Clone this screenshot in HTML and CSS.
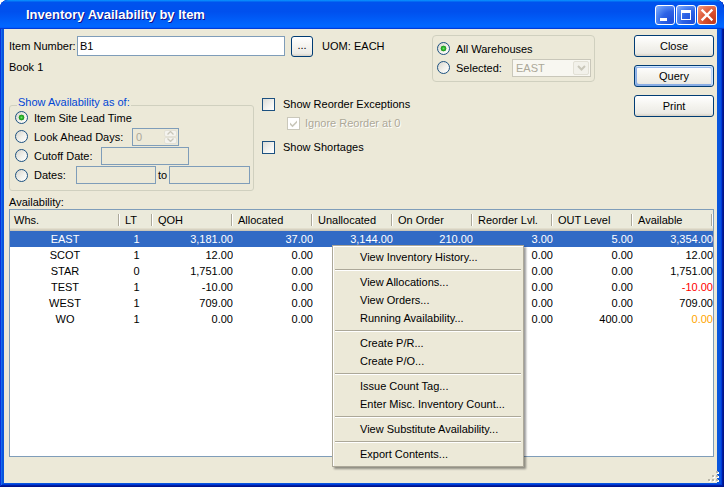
FILE: index.html
```html
<!DOCTYPE html>
<html>
<head>
<meta charset="utf-8">
<title>Inventory Availability by Item</title>
<link rel="stylesheet" href="styles.css">
</head>
<body>
<div class="window">
  <div class="titlebar">
    <span class="title">Inventory Availability by Item</span>
    <div class="tb-buttons">
      <span class="tb-btn blue"><svg width="18" height="18" viewBox="0 0 18 18"><rect x="4" y="12" width="7" height="3" fill="#fff"/></svg></span>
      <span class="tb-btn blue"><svg width="18" height="18" viewBox="0 0 18 18"><rect x="4.5" y="4.5" width="9" height="9" fill="none" stroke="#fff" stroke-width="1"/><rect x="4" y="4" width="10" height="3" fill="#fff"/></svg></span>
      <span class="tb-btn red"><svg width="18" height="18" viewBox="0 0 18 18"><path d="M4.5 4.5 L13.5 13.5 M13.5 4.5 L4.5 13.5" stroke="#fff" stroke-width="2.4" stroke-linecap="square"/></svg></span>
    </div>
  </div>
  <div class="client">
    <div class="top">
      <div class="left-pane">
        <div class="item-row">
          <span class="lbl-item">Item Number:</span>
          <span class="textbox item-input">B1</span>
          <span class="btn dots">...</span>
          <span class="uom-lbl">UOM:</span>
          <span>EACH</span>
        </div>
        <div class="book">Book 1</div>
        <div class="lower">
          <fieldset class="group avail">
            <legend>Show Availability as of:</legend>
            <div class="opt-list">
              <div class="opt"><span class="radio on"></span><span>Item Site Lead Time</span></div>
              <div class="opt"><span class="radio"></span><span class="opt-lbl w-look">Look Ahead Days:</span><span class="spin"><span class="spin-val">0</span><span class="spin-arrows"><span class="spin-up"><svg width="7" height="4" viewBox="0 0 7 4"><path d="M0.5 3.5 L3.5 0.5 L6.5 3.5" fill="none" stroke="#C9C7BA" stroke-width="1.3"/></svg></span><span class="spin-dn"><svg width="7" height="4" viewBox="0 0 7 4"><path d="M0.5 0.5 L3.5 3.5 L6.5 0.5" fill="none" stroke="#C9C7BA" stroke-width="1.3"/></svg></span></span></span></div>
              <div class="opt"><span class="radio"></span><span class="opt-lbl w-cut">Cutoff Date:</span><span class="textbox dis w-cutbox"></span></div>
              <div class="opt last"><span class="radio"></span><span class="opt-lbl w-dates">Dates:</span><span class="textbox dis w-d1"></span><span class="to">to</span><span class="textbox dis w-d2"></span></div>
            </div>
          </fieldset>
          <div class="checks">
            <div class="chk-row"><span class="chk"></span><span>Show Reorder Exceptions</span></div>
            <div class="chk-row sub"><span class="chk disabled"><svg width="11" height="11" viewBox="0 0 11 11"><path d="M2 4.5 L4.5 7 L9 2.5 L9 4.8 L4.5 9.3 L2 6.8 Z" fill="#C9C7BA"/></svg></span><span class="dis-text">Ignore Reorder at 0</span></div>
            <div class="chk-row third"><span class="chk"></span><span>Show Shortages</span></div>
          </div>
        </div>
      </div>
      <div class="wh-box">
        <div class="wh-row"><span class="radio on"></span><span>All Warehouses</span></div>
        <div class="wh-row"><span class="radio"></span><span class="wh-lbl">Selected:</span><span class="combo"><span class="combo-val">EAST</span><span class="combo-arrow"><svg width="9" height="6" viewBox="0 0 9 6"><path d="M1 1 L4.5 4.5 L8 1" fill="none" stroke="#C9C7BA" stroke-width="2"/></svg></span></span></div>
      </div>
      <div class="btn-col">
        <span class="btn big">Close</span>
        <span class="btn big default">Query</span>
        <span class="btn big">Print</span>
      </div>
    </div>
    <div class="avail-lbl">Availability:</div>
    <div class="table">
      <div class="thead">
        <span class="th first">Whs.</span>
        <span class="th">LT</span>
        <span class="th">QOH</span>
        <span class="th">Allocated</span>
        <span class="th">Unallocated</span>
        <span class="th">On Order</span>
        <span class="th">Reorder Lvl.</span>
        <span class="th">OUT Level</span>
        <span class="th">Available</span>
      </div>
      <div class="tr sel"><span class="td c">EAST</span><span class="td c">1</span><span class="td">3,181.00</span><span class="td">37.00</span><span class="td">3,144.00</span><span class="td">210.00</span><span class="td">3.00</span><span class="td">5.00</span><span class="td">3,354.00</span></div>
      <div class="tr"><span class="td c">SCOT</span><span class="td c">1</span><span class="td">12.00</span><span class="td">0.00</span><span class="td"></span><span class="td"></span><span class="td">0.00</span><span class="td">0.00</span><span class="td">12.00</span></div>
      <div class="tr"><span class="td c">STAR</span><span class="td c">0</span><span class="td">1,751.00</span><span class="td">0.00</span><span class="td"></span><span class="td"></span><span class="td">0.00</span><span class="td">0.00</span><span class="td">1,751.00</span></div>
      <div class="tr"><span class="td c">TEST</span><span class="td c">1</span><span class="td">-10.00</span><span class="td">0.00</span><span class="td"></span><span class="td"></span><span class="td">0.00</span><span class="td">0.00</span><span class="td neg">-10.00</span></div>
      <div class="tr"><span class="td c">WEST</span><span class="td c">1</span><span class="td">709.00</span><span class="td">0.00</span><span class="td"></span><span class="td"></span><span class="td">0.00</span><span class="td">0.00</span><span class="td">709.00</span></div>
      <div class="tr"><span class="td c">WO</span><span class="td c">1</span><span class="td">0.00</span><span class="td">0.00</span><span class="td"></span><span class="td"></span><span class="td">0.00</span><span class="td">400.00</span><span class="td warn">0.00</span></div>
    </div>
  </div>
  <div class="menu">
    <div class="mi">View Inventory History...</div>
    <div class="msep"></div>
    <div class="mi">View Allocations...</div>
    <div class="mi">View Orders...</div>
    <div class="mi">Running Availability...</div>
    <div class="msep"></div>
    <div class="mi">Create P/R...</div>
    <div class="mi">Create P/O...</div>
    <div class="msep"></div>
    <div class="mi">Issue Count Tag...</div>
    <div class="mi">Enter Misc. Inventory Count...</div>
    <div class="msep"></div>
    <div class="mi">View Substitute Availability...</div>
    <div class="msep"></div>
    <div class="mi">Export Contents...</div>
  </div>
  <svg class="grip" width="12" height="12" viewBox="0 0 12 12">
    <g fill="#fff"><rect x="10" y="2" width="2" height="2"/><rect x="6" y="6" width="2" height="2"/><rect x="10" y="6" width="2" height="2"/><rect x="2" y="10" width="2" height="2"/><rect x="6" y="10" width="2" height="2"/><rect x="10" y="10" width="2" height="2"/></g>
    <g fill="#B9B6A8"><rect x="9" y="1" width="2" height="2"/><rect x="5" y="5" width="2" height="2"/><rect x="9" y="5" width="2" height="2"/><rect x="1" y="9" width="2" height="2"/><rect x="5" y="9" width="2" height="2"/><rect x="9" y="9" width="2" height="2"/></g>
  </svg>
</div>
</body>
</html>
```

FILE: styles.css
```css
* { box-sizing: border-box; }
html, body { margin: 0; padding: 0; }
body {
  background: #ffffff;
  font-family: "Liberation Sans", Arial, sans-serif;
  font-size: 11px;
  color: #000;
}

.window {
  position: relative;
  width: 724px;
  height: 487px;
  display: flex;
  flex-direction: column;
  background: #0855DD;
  border-radius: 8px 8px 0 0;
  overflow: hidden;
  box-shadow: inset -1px -1px #00138C, inset 1px 1px #0831D9, inset -2px -2px #001EA0, inset 2px 2px #166AEE, inset -3px -3px #003BDA, inset 3px 3px #0855DD;
}

.titlebar {
  height: 29px;
  flex: none;
  display: flex;
  align-items: center;
  padding: 0 7px 0 26px;
  border-radius: 8px 8px 0 0;
  background: linear-gradient(180deg, #0997FF 0%, #0053EE 8%, #0050EE 40%, #0066FF 88%, #0066FF 93%, #005BFF 95%, #003DD7 96%, #003DD7 100%);
}
.title {
  flex: 1;
  color: #fff;
  font-weight: bold;
  font-size: 13px;
  text-shadow: 1px 1px #0F1089;
  white-space: nowrap;
}
.tb-buttons { display: flex; gap: 1px; margin-top: 1px; }
.tb-btn {
  width: 20px;
  height: 20px;
  border: 1px solid #fff;
  border-radius: 3px;
  display: flex;
  align-items: center;
  justify-content: center;
}
.tb-btn.blue {
  background: radial-gradient(circle at 85% 85%, #1F4FD8 0%, #2D63E6 45%, #5A8FF5 75%, #8DB3FA 100%);
}
.tb-btn.red {
  background: radial-gradient(circle at 85% 85%, #C23A1D 0%, #D9512F 45%, #E9795A 75%, #F3A58C 100%);
}

.client {
  flex: 1;
  margin: 0 7px 4px 4px;
  background: #ECE9D8;
  padding: 6px 3px 0 5px;
}

.top { display: flex; align-items: flex-start; }
.left-pane { width: 423px; flex: none; }

.item-row { display: flex; align-items: center; height: 22px; }
.lbl-item { width: 68px; }
.textbox {
  display: inline-block;
  border: 1px solid #7F9DB9;
  background: #fff;
  flex: none;
}
.item-input { width: 208px; height: 20px; line-height: 18px; padding-left: 2px; }
.btn {
  display: flex;
  align-items: center;
  justify-content: center;
  border: 1px solid #003C74;
  border-radius: 3px;
  background: linear-gradient(180deg, #FFFFFF 0%, #F4F3EE 50%, #ECEBE6 86%, #D6D0C5 100%);
  flex: none;
}
.dots { width: 22px; height: 21px; margin-left: 6px; padding-bottom: 2px; }
.uom-lbl { margin-left: 9px; width: 32px; }

.book { height: 20px; line-height: 20px; }

.lower { display: flex; align-items: flex-start; margin-top: 19px; }

.group {
  margin: 0;
  width: 245px;
  padding: 0 0 5px 5px;
  border: 1px solid #D0D0BF;
  border-radius: 3px;
  min-width: 0;
}
.group legend {
  color: #0046D5;
  line-height: 13px;
  padding: 0 1px 5px 1px;
  margin-left: 2px;
}
.opt-list { margin-top: -6px; }
.opt { display: flex; align-items: center; height: 19px; }
.opt.last { height: 20px; }
.opt .radio { margin-right: 6px; }
.opt-lbl { flex: none; }
.w-look { width: 98px; }
.w-cut { width: 67px; }
.w-dates { width: 42px; }
.textbox.dis { background: #ECE9D8; height: 18px; }
.w-cutbox { width: 88px; }
.w-d1 { width: 80px; }
.w-d2 { width: 81px; }
.to { margin-left: 2px; width: 11px; }

.spin {
  display: flex;
  width: 47px;
  height: 18px;
  border: 1px solid #7F9DB9;
  background: #ECE9D8;
}
.spin-val { flex: 1; color: #ACA899; padding-left: 3px; line-height: 16px; }
.spin-arrows { width: 15px; display: flex; flex-direction: column; padding: 1px; gap: 0; }
.spin-up, .spin-dn {
  flex: 1;
  display: flex;
  align-items: center;
  justify-content: center;
  background: #F4F3EE;
  border: 1px solid #E3E1D6;
  border-radius: 2px;
}

.radio {
  display: inline-block;
  width: 13px;
  height: 13px;
  border-radius: 50%;
  border: 1px solid #1C5180;
  background: linear-gradient(135deg, #D6D5CD 0%, #F2F1EC 55%, #FFFFFF 100%);
  flex: none;
}
.radio.on {
  background: radial-gradient(circle, #6EE06E 0px, #2BB52B 1.5px, #1F941F 2.6px, rgba(31,148,31,0) 3.2px), linear-gradient(135deg, #D6D5CD 0%, #F2F1EC 55%, #FFFFFF 100%);
}

.checks { margin-left: 8px; }
.chk-row { display: flex; align-items: center; height: 16px; }
.chk-row .chk { margin-right: 8px; }
.chk-row.sub { margin-top: 3px; padding-left: 25px; }
.chk-row.sub .chk { margin-right: 5px; }
.chk-row.third { margin-top: 8px; }
.chk {
  display: flex;
  align-items: center;
  justify-content: center;
  width: 13px;
  height: 13px;
  border: 1px solid #1C5180;
  background: linear-gradient(135deg, #DCDCD7 0%, #F4F4F1 60%, #FFFFFF 100%);
  flex: none;
}
.chk.disabled { border-color: #CAC8BB; background: #fff; }
.dis-text { color: #ACA899; text-shadow: 1px 1px #fff; }

.wh-box {
  width: 163px;
  height: 47px;
  flex: none;
  border: 1px solid #D0D0BF;
  border-radius: 4px;
  padding: 3px 0 0 4px;
}
.wh-row { display: flex; align-items: center; height: 19px; }
.wh-row .radio { margin-right: 6px; }
.wh-lbl { width: 56px; }
.combo {
  display: flex;
  width: 79px;
  height: 18px;
  border: 1px solid #C9C7BA;
  background: #F8F7F1;
}
.combo-val { flex: 1; color: #ACA899; padding-left: 3px; line-height: 16px; }
.combo-arrow {
  width: 16px;
  margin: 1px;
  display: flex;
  align-items: center;
  justify-content: center;
  background: #F2F1EA;
  border: 1px solid #E2E0D5;
  border-radius: 2px;
}

.btn-col { margin-left: 39px; display: flex; flex-direction: column; gap: 8px; }
.btn.big { width: 80px; height: 22px; }
.btn.default {
  box-shadow: inset -1px 1px #CEE7FF, inset 1px 2px #98B8EA, inset -2px 2px #BCD4F6, inset 1px -1px #89ADE4, inset 2px -2px #89ADE4;
}

.avail-lbl { margin-top: 5px; line-height: 13px; height: 13px; }

.table {
  width: 705px;
  height: 248px;
  border: 1px solid #7F9DB9;
  background: #fff;
}
.thead, .tr {
  display: grid;
  grid-template-columns: 110px 33px repeat(7, 80px);
}
.thead {
  height: 21px;
  background: #EBEADB;
  box-shadow: inset 0 -1px #CBC7B8, inset 0 -2px #D6D2C2, inset 0 -3px #E2DECD;
}
.th {
  line-height: 20px;
  padding-left: 5px;
  white-space: nowrap;
  overflow: hidden;
  background:
    linear-gradient(#ACA899, #ACA899) no-repeat right 1px top 4px / 1px 12px,
    linear-gradient(#FFFFFF, #FFFFFF) no-repeat right 0 top 4px / 1px 12px;
}
.th.first { padding-left: 4px; }
.tr { height: 16px; line-height: 16px; }
.tr.sel { background: #316AC5; color: #fff; }
.td { text-align: right; padding-right: 0; white-space: nowrap; overflow: hidden; }
.td.c { text-align: center; }
.td.neg { color: #FF0000; }
.td.warn { color: #FFA500; }

.menu {
  position: absolute;
  left: 332px;
  top: 245px;
  width: 192px;
  background: #ECE9D8;
  border: 1px solid #ACA899;
  padding: 2px 1px 3px;
  box-shadow: inset 1px 1px #FFFFFF, 2px 2px 2px rgba(0, 0, 0, 0.4);
}
.mi { height: 18px; line-height: 18px; padding-left: 26px; white-space: nowrap; }
.msep { margin: 3px 1px 2px; border-top: 1px solid #ACA899; border-bottom: 1px solid #FFFFFF; }

.grip { position: absolute; right: 5px; bottom: 5px; }
```
